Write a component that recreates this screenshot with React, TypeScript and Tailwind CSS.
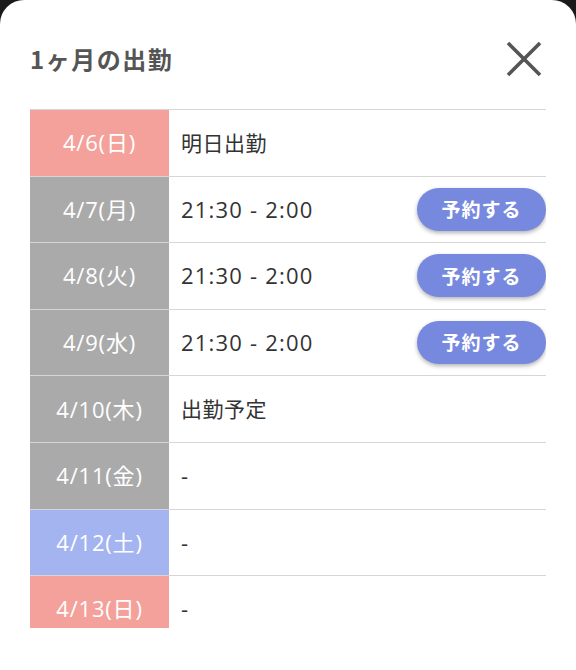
import React from "react";

type Row = { date: string; kind: "sun" | "sat" | "wd"; text: string; btn?: boolean; latin?: boolean };

const rows: Row[] = [
  { date: "4/6(日)", kind: "sun", text: "明日出勤" },
  { date: "4/7(月)", kind: "wd", text: "21:30 - 2:00", btn: true, latin: true },
  { date: "4/8(火)", kind: "wd", text: "21:30 - 2:00", btn: true, latin: true },
  { date: "4/9(水)", kind: "wd", text: "21:30 - 2:00", btn: true, latin: true },
  { date: "4/10(木)", kind: "wd", text: "出勤予定" },
  { date: "4/11(金)", kind: "wd", text: "-", latin: true },
  { date: "4/12(土)", kind: "sat", text: "-", latin: true },
  { date: "4/13(日)", kind: "sun", text: "-", latin: true },
];

const bg = {
  sun: "bg-[#f4a19b]",
  sat: "bg-[#a3b4f1]",
  wd: "bg-[#aaaaaa]",
};

export default function App() {
  return (
    <div
      className="w-[576px] h-[670px] bg-[#1a1a1a] overflow-hidden"
      style={{ fontFamily: '"Noto Sans CJK JP", "Noto Sans", sans-serif' }}
    >
      <div className="w-full h-full bg-white rounded-t-[24px] flex flex-col">
        <div className="flex items-center justify-between pl-[30px] pr-[34px] pt-[26px] h-[92px]">
          <h1 className="text-[24px] font-bold text-[#555] tracking-[1.5px] leading-none">1ヶ月の出勤</h1>
          <svg width="36" height="36" viewBox="0 0 36 36">
            <path d="M2 2L34 34M34 2L2 34" stroke="#555" strokeWidth="3.6" strokeLinecap="butt" />
          </svg>
        </div>
        <div className="mx-[30px] mt-[17px] h-[519px] overflow-hidden">
          {rows.map((r, i) => (
            <div key={i} className="flex h-[66.6px] border-t border-[#d6d6d6]">
              <div
                className={`w-[139px] shrink-0 flex items-center justify-center text-white text-[22px] tracking-[0.8px] ${bg[r.kind]}`}
                style={{ fontFamily: '"Open Sans", "Noto Sans CJK JP", sans-serif' }}
              >
                {r.date}
              </div>
              <div className="flex-1 flex items-center justify-between pl-[12px]">
                {r.latin ? (
                  <span
                    className="text-[22px] text-[#333] tracking-[1.2px]"
                    style={{ fontFamily: '"Open Sans", "Noto Sans CJK JP", sans-serif' }}
                  >
                    {r.text}
                  </span>
                ) : (
                  <span className="text-[21px] text-[#333] tracking-[0.5px]">{r.text}</span>
                )}
                {r.btn && (
                  <button className="w-[129px] h-[43px] rounded-full bg-[#7689df] text-white text-[19px] font-bold shadow-[0_2px_4px_rgba(0,0,0,0.3)] tracking-[1px]">
                    予約する
                  </button>
                )}
              </div>
            </div>
          ))}
        </div>
      </div>
    </div>
  );
}
